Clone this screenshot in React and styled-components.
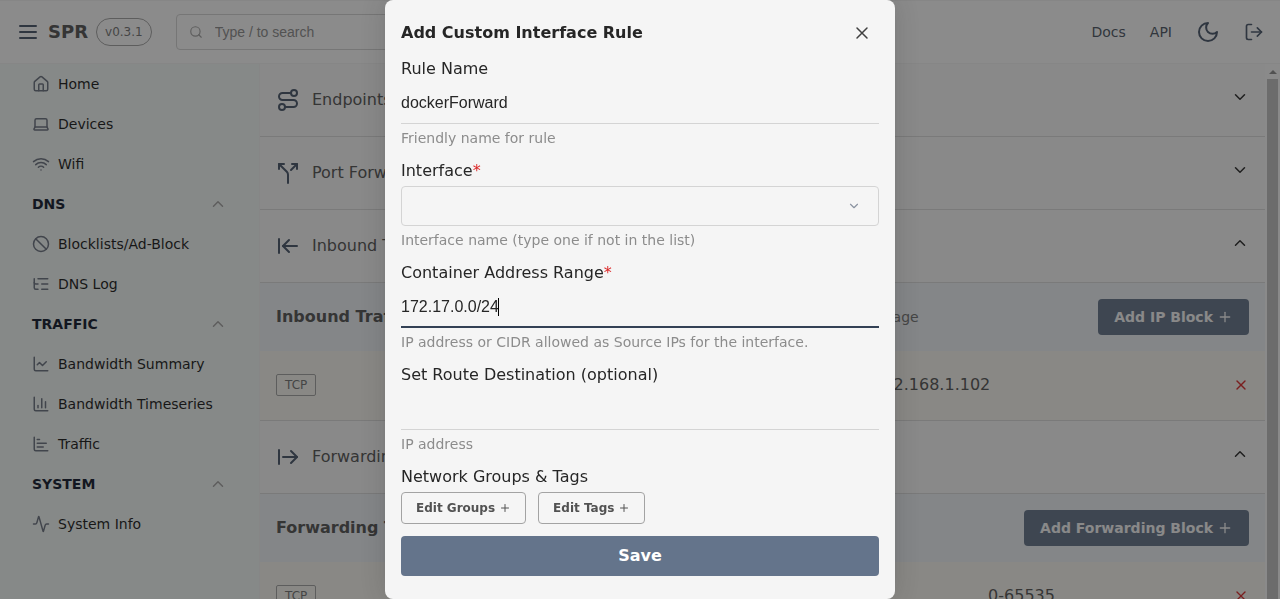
import React from "react";
import styled, { createGlobalStyle } from "styled-components";
import {
  Route, Split, ArrowLeftToLine, ArrowRightFromLine, ChevronDown, ChevronUp,
  Plus, X, Search, LogOut, House, Laptop, Wifi, Ban, ListTree,
  ChartLine, ChartColumn, ChartBar, Activity,
} from "lucide-react";

const Global = createGlobalStyle`
  *, *::before, *::after { box-sizing: border-box; }
  body {
    margin: 0;
    background: #ffffff;
    color: #262626;
    font-family: "DejaVu Sans", sans-serif;
    font-size: 16px;
    line-height: 22px;
  }
  button, input, select { font: inherit; color: inherit; margin: 0; }
  a { color: inherit; text-decoration: none; }
  svg { display: block; flex: none; }
`;

const Page = styled.div`
  height: 100vh;
  display: flex;
  flex-direction: column;
  overflow: hidden;
`;

const IconButton = styled.button`
  display: flex;
  padding: ${(p) => p.$pad || 0}px;
  border: 0;
  background: none;
  color: ${(p) => p.$color || "inherit"};
`;

/* Top bar */
const TopBar = styled.header`
  flex: none;
  height: 64px;
  display: flex;
  align-items: center;
  padding: 0 16px;
  border: solid #f5f5f5;
  border-width: 1px 0;
  color: #475569;
`;
const Brand = styled.span`
  margin: 0 8px;
  font-size: 18px;
  font-weight: 700;
  color: #525252;
`;
const Version = styled.span`
  padding: 2px 8px;
  border: 1px solid #a3a3a3;
  border-radius: 14px;
  font-size: 12px;
  color: #737373;
`;
const SearchBox = styled.label`
  display: flex;
  align-items: center;
  gap: 12px;
  width: 320px;
  height: 36px;
  margin-left: 24px;
  padding: 0 12px;
  border: 1px solid #d4d4d4;
  border-radius: 4px;
  color: #a3a3a3;
`;
const SearchInput = styled.input`
  flex: 1;
  min-width: 0;
  padding: 0;
  border: 0;
  outline: 0;
  background: none;
  font-family: "Liberation Sans", sans-serif;
  font-size: 14px;
  &::placeholder { color: #8c8c8c; opacity: 1; }
`;
const TopLinks = styled.nav`
  margin-left: auto;
  display: flex;
  align-items: center;
  gap: 24px;
  font-size: 14px;
  a { color: #4b5563; }
`;

/* Sidebar */
const Body = styled.div`
  flex: 1;
  min-height: 0;
  display: flex;
`;
const Sidebar = styled.nav`
  flex: none;
  width: 260px;
  border-right: 1px solid #f5f5f5;
  background: #f5fbf8;
  font-size: 14px;
`;
const NavLink = styled.a`
  display: flex;
  align-items: center;
  gap: 8px;
  height: 40px;
  padding: 0 32px;
  color: #171717;
  svg { color: #6b7280; }
`;
const NavGroup = styled.button`
  display: flex;
  align-items: center;
  justify-content: space-between;
  width: 100%;
  height: 40px;
  padding: 0 32px;
  border: 0;
  background: none;
  font-weight: 700;
  color: #0f172a;
  svg { color: #a3a3a3; }
`;

/* Firewall content */
const Content = styled.main`
  flex: 1;
  min-width: 0;
  background: #fafafa;
`;
const AccordionRow = styled.button`
  display: flex;
  align-items: flex-start;
  gap: 12px;
  width: 100%;
  padding: 24px 16px;
  border: 0;
  border-bottom: 1px solid #dcdcdc;
  background: none;
  text-align: left;
  color: #525252;
  line-height: 24px;
  > svg:first-child { color: #475569; }
  > svg:last-child { color: #262626; }
`;
const AccordionTitle = styled.span`
  flex: 1;
`;
const SectionHead = styled.div`
  display: flex;
  align-items: center;
  justify-content: space-between;
  padding: 16px;
  background: #f1f5f9;
  h2 { margin: 0; font-size: 16px; font-weight: 700; color: #525252; }
  p { margin: 0; font-size: 14px; color: #737373; }
`;
const ActionButton = styled.button`
  display: flex;
  align-items: center;
  justify-content: center;
  gap: 4px;
  height: 36px;
  padding: 0 16px;
  border: 0;
  border-radius: 4px;
  background: #64748b;
  color: #fafafa;
  font-size: 14px;
  font-weight: 700;
`;
const RuleRow = styled.div`
  display: flex;
  align-items: center;
  justify-content: space-between;
  height: 70px;
  padding: 0 16px 1px;
  border-bottom: 1px solid #dcdcdc;
  background: #faf9f3;
  color: #525252;
`;
const Badge = styled.span`
  padding: 0 8px;
  border: 1px solid #a3a3a3;
  border-radius: 2px;
  font-size: 12px;
  line-height: 20px;
  color: #737373;
`;

const ScrollTrack = styled.div`
  flex: none;
  width: 15px;
  padding: 0 2px;
  display: flex;
  flex-direction: column;
  background: #fcfcfc;
`;
const ScrollArrow = styled.span`
  height: 15px;
  display: flex;
  align-items: center;
  justify-content: center;
  &::before {
    content: "";
    border: solid transparent;
    border-width: 0 4px 4px;
    border-bottom-color: #8c8c8c;
  }
`;
const ScrollThumb = styled.span`
  flex: 1;
  background: #c1c1c1;
`;

/* Dialog */
const Backdrop = styled.div`
  position: fixed;
  inset: 0;
  display: flex;
  align-items: center;
  justify-content: center;
  background: rgba(23, 23, 23, 0.5);
`;
const Dialog = styled.section`
  width: 510px;
  max-width: 100%;
  max-height: 100%;
  overflow: hidden;
  padding: 16px 16px 24px;
  border-radius: 8px;
  background: #f5f5f5;
  box-shadow: 0 0 24px rgba(38, 38, 38, 0.2);
`;
const DialogHead = styled.header`
  display: flex;
  align-items: center;
  justify-content: space-between;
  padding-bottom: 8px;
  h1 { margin: 0; font-size: 16px; font-weight: 700; }
`;
const Form = styled.form`
  display: flex;
  flex-direction: column;
  gap: 12px;
`;
const Field = styled.div`
  display: flex;
  flex-direction: column;
  gap: 4px;
`;
const Required = styled.span`
  color: #dc2626;
`;
const Helper = styled.span`
  font-size: 14px;
  line-height: 20px;
  color: #8c8c8c;
`;
const InputLine = styled.div`
  display: flex;
  align-items: center;
  height: 40px;
  padding-bottom: ${(p) => (p.$focused ? 0 : 1)}px;
  border-bottom: ${(p) => (p.$focused ? "2px solid #334155" : "1px solid #d4d4d4")};
`;
const TextInput = styled.input`
  ${(p) => (p.$focused ? "field-sizing: content;" : "flex: 1;")}
  min-width: 0;
  padding: 0;
  border: 0;
  outline: 0;
  background: none;
  font-family: "Liberation Sans", sans-serif;
  font-size: 16px;
`;
const Caret = styled.span`
  width: 1px;
  height: 18px;
  margin-left: -1px;
  background: #000000;
`;
const SelectBox = styled.div`
  display: flex;
  align-items: center;
  height: 40px;
  padding-right: 17px;
  border: 1px solid #d4d4d4;
  border-radius: 4px;
  color: #8b93a1;
`;
const Select = styled.select`
  flex: 1;
  height: 100%;
  border: 0;
  outline: 0;
  appearance: none;
  background: none;
`;
const ButtonRow = styled.div`
  display: flex;
  gap: 12px;
`;
const OutlineButton = styled.button`
  display: flex;
  align-items: center;
  gap: 4px;
  height: 32px;
  padding: 0 14px;
  border: 1px solid #a3a3a3;
  border-radius: 4px;
  background: none;
  color: #525252;
  font-size: 12px;
  font-weight: 700;
`;
const SaveButton = styled(ActionButton)`
  height: 40px;
  font-size: 16px;
  color: #ffffff;
`;

const nav = [
  { icon: House, label: "Home" },
  { icon: Laptop, label: "Devices" },
  { icon: Wifi, label: "Wifi" },
  { group: "DNS" },
  { icon: Ban, label: "Blocklists/Ad-Block" },
  { icon: ListTree, label: "DNS Log" },
  { group: "TRAFFIC" },
  { icon: ChartLine, label: "Bandwidth Summary" },
  { icon: ChartColumn, label: "Bandwidth Timeseries" },
  { icon: ChartBar, label: "Traffic" },
  { group: "SYSTEM" },
  { icon: Activity, label: "System Info" },
];

function MenuIcon() {
  return (
    <svg width="24" height="24" viewBox="0 0 24 24" fill="none" stroke="currentColor" strokeWidth="2" strokeLinecap="round">
      <path d="M4 6h16M4 12h16M4 18h16" />
    </svg>
  );
}
function MoonIcon() {
  return (
    <svg width="24" height="24" viewBox="0 0 24 24" fill="none" stroke="currentColor" strokeWidth="2" strokeLinecap="round" strokeLinejoin="round">
      <path d="M12 3a6 6 0 0 0 9 9 9 9 0 1 1-9-9Z" />
    </svg>
  );
}
function CloseIcon() {
  return (
    <svg width="18" height="18" viewBox="0 0 18 18" fill="none" stroke="currentColor" strokeWidth="1.5" strokeLinecap="round">
      <path d="M4 4l10 10M14 4L4 14" />
    </svg>
  );
}

function Accordion({ icon: Icon, title, open }) {
  const Chevron = open ? ChevronUp : ChevronDown;
  return (
    <AccordionRow type="button" aria-expanded={!!open}>
      <Icon size={24} />
      <AccordionTitle>{title}</AccordionTitle>
      <Chevron size={18} />
    </AccordionRow>
  );
}
function Section({ title, hint, action }) {
  return (
    <SectionHead>
      <h2>{title}</h2>
      <p>{hint}</p>
      <ActionButton type="button">{action}<Plus size={16} /></ActionButton>
    </SectionHead>
  );
}
function Rule({ protocol, values }) {
  return (
    <RuleRow>
      <Badge>{protocol}</Badge>
      {values.map((v) => <span key={v}>{v}</span>)}
      <IconButton type="button" $color="#dc2626" aria-label="Delete rule"><X size={16} /></IconButton>
    </RuleRow>
  );
}

export default function App() {
  return (
    <Page>
      <Global />
      <TopBar>
        <IconButton type="button" aria-label="Menu"><MenuIcon /></IconButton>
        <Brand>SPR</Brand>
        <Version>v0.3.1</Version>
        <SearchBox>
          <Search size={14} />
          <SearchInput type="text" placeholder="Type / to search" aria-label="Search" />
        </SearchBox>
        <TopLinks>
          <a href="#docs">Docs</a>
          <a href="#api">API</a>
          <IconButton type="button" aria-label="Dark mode"><MoonIcon /></IconButton>
          <IconButton type="button" aria-label="Log out"><LogOut size={20} /></IconButton>
        </TopLinks>
      </TopBar>
      <Body>
        <Sidebar>
          {nav.map(({ icon: Icon, label, group }) =>
            group ? (
              <NavGroup key={group} type="button">{group}<ChevronUp size={18} /></NavGroup>
            ) : (
              <NavLink key={label} href={"#" + label}><Icon size={18} />{label}</NavLink>
            )
          )}
        </Sidebar>
        <Content>
          <Accordion icon={Route} title="Endpoints" />
          <Accordion icon={Split} title="Port Forwarding" />
          <Accordion icon={ArrowLeftToLine} title="Inbound Traffic" open />
          <Section title="Inbound Traffic Block" hint="Match traffic at the PREROUTING stage" action="Add IP Block" />
          <Rule protocol="TCP" values={["0.0.0.0/0", "192.168.1.102"]} />
          <Accordion icon={ArrowRightFromLine} title="Forwarding" open />
          <Section title="Forwarding Traffic Block" hint="Match at FORWARDING stage" action="Add Forwarding Block" />
          <Rule protocol="TCP" values={["1.2.3.4", "6.7.8.9/24", "0-65535"]} />
        </Content>
        <ScrollTrack aria-hidden="true">
          <ScrollArrow />
          <ScrollThumb />
        </ScrollTrack>
      </Body>
      <Backdrop>
        <Dialog role="dialog" aria-modal="true" aria-labelledby="dialog-title">
          <DialogHead>
            <h1 id="dialog-title">Add Custom Interface Rule</h1>
            <IconButton type="button" $pad={8} $color="#404040" aria-label="Close"><CloseIcon /></IconButton>
          </DialogHead>
          <Form onSubmit={(e) => e.preventDefault()}>
            <Field>
              <label htmlFor="rule-name">Rule Name</label>
              <InputLine><TextInput id="rule-name" type="text" defaultValue="dockerForward" /></InputLine>
              <Helper>Friendly name for rule</Helper>
            </Field>
            <Field>
              <label htmlFor="iface">Interface<Required>*</Required></label>
              <SelectBox>
                <Select id="iface" />
                <ChevronDown size={14} />
              </SelectBox>
              <Helper>Interface name (type one if not in the list)</Helper>
            </Field>
            <Field>
              <label htmlFor="range">Container Address Range<Required>*</Required></label>
              <InputLine $focused>
                <TextInput id="range" type="text" defaultValue="172.17.0.0/24" $focused />
                <Caret />
              </InputLine>
              <Helper>IP address or CIDR allowed as Source IPs for the interface.</Helper>
            </Field>
            <Field>
              <label htmlFor="route">Set Route Destination (optional)</label>
              <InputLine><TextInput id="route" type="text" /></InputLine>
              <Helper>IP address</Helper>
            </Field>
            <Field>
              <span>Network Groups &amp; Tags</span>
              <ButtonRow>
                <OutlineButton type="button">Edit Groups<Plus size={12} /></OutlineButton>
                <OutlineButton type="button">Edit Tags<Plus size={12} /></OutlineButton>
              </ButtonRow>
            </Field>
            <SaveButton type="submit">Save</SaveButton>
          </Form>
        </Dialog>
      </Backdrop>
    </Page>
  );
}
